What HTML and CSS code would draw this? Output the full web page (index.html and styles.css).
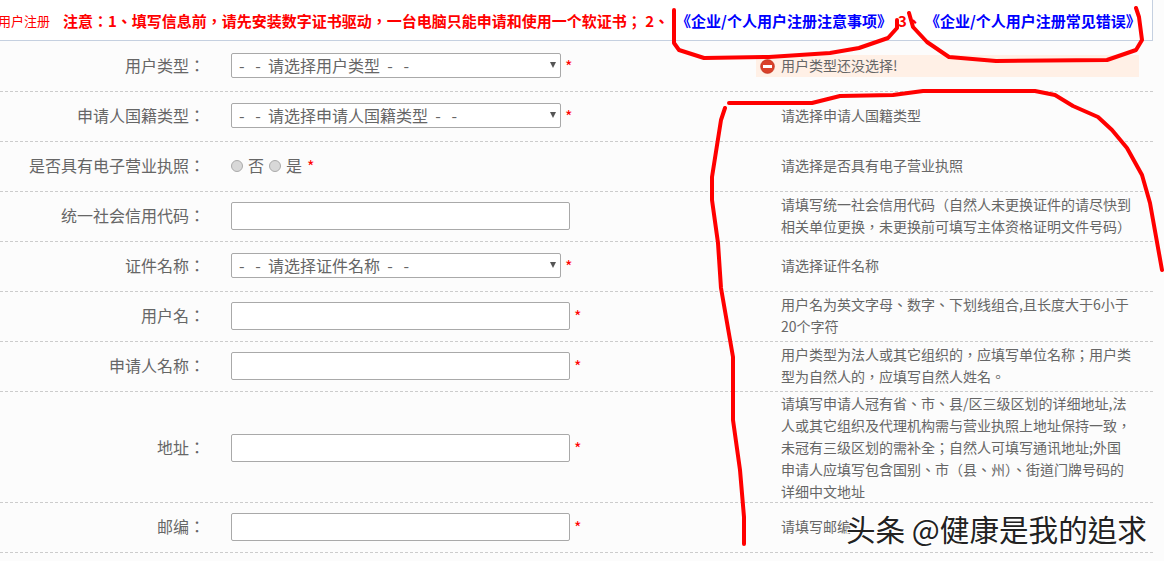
FILE: index.html
```html
<!DOCTYPE html>
<html lang="zh-CN">
<head>
<meta charset="utf-8">
<title>用户注册</title>
<link rel="stylesheet" href="styles.css">
</head>
<body>
<div class="page">
  <header class="top">
    <span class="crumb">用户注册</span>
    <span class="notice">注意：1、填写信息前，请先安装数字证书驱动，一台电脑只能申请和使用一个软证书； 2、</span>
    <a class="doc doc-a">《企业/个人用户注册注意事项》</a>
    <span class="notice num">3、</span>
    <a class="doc doc-b">《企业/个人用户注册常见错误》</a>
  </header>
  <main class="form">
    <div class="row">
      <div class="label">用户类型：</div>
      <div class="field"><span class="sel-wrap"><select class="sel"><option>-&nbsp;&nbsp;&nbsp;-&nbsp;&nbsp;请选择用户类型&nbsp;&nbsp;-&nbsp;&nbsp;&nbsp;-</option></select></span><span class="req">*</span></div>
      <div class="hint error"><svg class="err-icon" viewBox="0 0 16 16"><circle cx="8" cy="8" r="7.4" fill="#d9412a" stroke="#b5301a" stroke-width="0.6"/><rect x="3.2" y="6.4" width="9.6" height="3.2" fill="#fff"/></svg><span class="err-text">用户类型还没选择!</span></div>
    </div>
    <div class="row">
      <div class="label">申请人国籍类型：</div>
      <div class="field"><span class="sel-wrap"><select class="sel"><option>-&nbsp;&nbsp;&nbsp;-&nbsp;&nbsp;请选择申请人国籍类型&nbsp;&nbsp;-&nbsp;&nbsp;&nbsp;-</option></select></span><span class="req">*</span></div>
      <div class="hint">请选择申请人国籍类型</div>
    </div>
    <div class="row">
      <div class="label">是否具有电子营业执照：</div>
      <div class="field radios"><i class="radio"></i><span class="opt">否</span><i class="radio"></i><span class="opt">是</span><span class="req">*</span></div>
      <div class="hint">请选择是否具有电子营业执照</div>
    </div>
    <div class="row">
      <div class="label">统一社会信用代码：</div>
      <div class="field"><input class="inp" type="text"></div>
      <div class="hint">请填写统一社会信用代码（自然人未更换证件的请尽快到相关单位更换，未更换前可填写主体资格证明文件号码）</div>
    </div>
    <div class="row">
      <div class="label">证件名称：</div>
      <div class="field"><span class="sel-wrap"><select class="sel"><option>-&nbsp;&nbsp;&nbsp;-&nbsp;&nbsp;请选择证件名称&nbsp;&nbsp;-&nbsp;&nbsp;&nbsp;-</option></select></span><span class="req">*</span></div>
      <div class="hint">请选择证件名称</div>
    </div>
    <div class="row">
      <div class="label">用户名：</div>
      <div class="field"><input class="inp" type="text"><span class="req">*</span></div>
      <div class="hint">用户名为英文字母、数字、下划线组合,且长度大于6小于20个字符</div>
    </div>
    <div class="row">
      <div class="label">申请人名称：</div>
      <div class="field"><input class="inp" type="text"><span class="req">*</span></div>
      <div class="hint">用户类型为法人或其它组织的，应填写单位名称；用户类型为自然人的，应填写自然人姓名。</div>
    </div>
    <div class="row row-tall">
      <div class="label">地址：</div>
      <div class="field"><input class="inp" type="text"><span class="req">*</span></div>
      <div class="hint">请填写申请人冠有省、市、县/区三级区划的详细地址,法人或其它组织及代理机构需与营业执照上地址保持一致，未冠有三级区划的需补全；自然人可填写通讯地址;外国申请人应填写包含国别、市（县、州）、街道门牌号码的详细中文地址</div>
    </div>
    <div class="row">
      <div class="label">邮编：</div>
      <div class="field"><input class="inp" type="text"><span class="req">*</span></div>
      <div class="hint">请填写邮编</div>
    </div>
  </main>
  <svg class="marks" viewBox="0 0 1164 561" fill="none">
    <path d="M674 10 L674 43 L679 50 L704 58 L769 57 L830 53 L859 48 L888 38 L897 28 L897 20"/>
    <path d="M909 13 L913 27 L927 42 L949 57 L996 61 L1107 60 L1136 50 L1142 40 L1139 17 L1136 8"/>
    <path d="M729 103 L812 103 L840 96 L893 95 L923 91 L1035 91 L1055 95 L1073 106 L1098 117 L1112 130 L1127 148 L1142 175 L1150 203 L1162 270"/>
    <path d="M725 108 L721 120 L712 177 L712 200 L718 243 L721 288 L733 357 L733 420 L740 470 L744 517 L744 544"/>
  </svg>
  <div class="watermark">头条 @健康是我的追求</div>
</div>
</body>
</html>
```
FILE: styles.css
```css
* { box-sizing: border-box; }
html, body { margin: 0; padding: 0; }
body { background: #fcfcfc; font-family: "Noto Sans CJK TC", "Noto Sans", sans-serif; font-feature-settings: "locl" 0; color: #666; overflow: hidden; }
.page { position: relative; width: 1164px; height: 561px; overflow: hidden; }

.top { width: 1153px; height: 41px; background: #fff; border-bottom: 1px solid #c5d0e0; border-right: 1px solid #c5d0e0; display: flex; align-items: center; white-space: nowrap; overflow: hidden; }
.crumb { color: #f00; font-size: 13px; margin-left: -2px; width: 65px; flex: none; }
.notice { color: #f00; font-weight: 700; font-size: 15px; }
.doc { color: #00f; font-weight: 700; font-size: 15px; }
.doc-a { margin-left: 7px; }
.num { margin-left: 6px; width: 27px; flex: none; }
.doc-b { margin-left: 0; }

.form { width: 1153px; margin-top: 1px; }
.row { display: grid; grid-template-columns: 205px 526px 392px; height: 50px; align-items: center; border-bottom: 1px dashed #ccc; }
.row-tall { height: 111px; }
.label { text-align: right; font-size: 16px; color: #666; padding-bottom: 4px; }
.field { margin-left: 26px; margin-bottom: 2px; display: flex; align-items: center; font-size: 16px; }
.hint { margin-left: 50px; padding-bottom: 4px; font-size: 14px; line-height: 22px; color: #666; width: 352px; }
.error { margin-left: 25px; margin-bottom: 1px; padding-bottom: 0; width: 383px; height: 22px; background: #fff0e6; padding-left: 4px; display: flex; align-items: center; gap: 6px; }
.err-icon { width: 15px; height: 15px; flex: none; }
.err-text { display: block; margin-top: -3px; }
.sel-wrap { position: relative; display: block; width: 330px; height: 25px; }
.sel-wrap::after { content: ""; position: absolute; right: 5px; top: 9px; border-left: 3px solid transparent; border-right: 3px solid transparent; border-top: 6px solid #555; }
.sel { display: block; appearance: none; width: 330px; height: 25px; background: #fff; border: 1px solid #a9a9a9; border-radius: 2px; color: #666; font: 16px/23px "Noto Sans CJK TC", sans-serif; font-feature-settings: "locl" 0; padding: 0 7px; }
.inp { width: 339px; height: 28px; background: #fff; border: 1px solid #a9a9a9; border-radius: 2px; padding: 0 4px; }
.req { color: #f00; margin-left: 4px; font-size: 16px; }
.radios { gap: 5px; }
.radios .req { margin-left: 0; }
.opt { display: block; margin-top: -2px; }
.radio { width: 12px; height: 12px; border-radius: 50%; background: #d8d8d8; border: 1px solid #aaa; }

.marks { position: absolute; left: 0; top: 0; width: 1164px; height: 561px; pointer-events: none; }
.marks path { stroke: #f00; stroke-width: 4; stroke-linecap: round; stroke-linejoin: round; }
.watermark { position: absolute; left: 846px; top: 510px; font-size: 29.6px; line-height: 38px; color: #222; white-space: nowrap; text-shadow: -1px -1px 0 #fff, 1px -1px 0 #fff, -1px 1px 0 #fff, 1px 1px 0 #fff; }
```
